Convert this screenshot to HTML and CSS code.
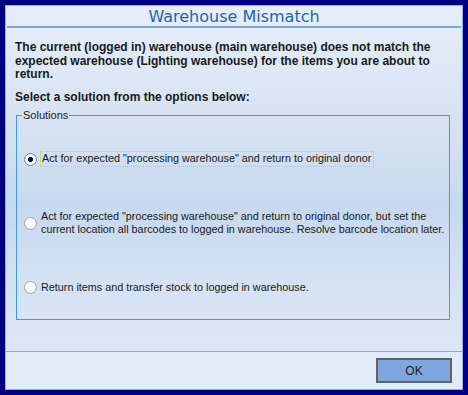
FILE: index.html
```html
<!DOCTYPE html>
<html lang="en">
<head>
  <meta charset="UTF-8" />
  <title>Warehouse Mismatch</title>
  <link rel="stylesheet" href="styles.css">
</head>
<body>
  <div class="dialog">
    <h1 class="title">Warehouse Mismatch</h1>
    <div class="content">
      <p class="message">The current (logged in) warehouse (main warehouse) does not match the expected warehouse (Lighting warehouse) for the items you are about to return.</p>
      <p class="message prompt">Select a solution from the options below:</p>
      <fieldset class="solutions">
        <legend>Solutions</legend>
        <label class="option first">
          <input type="radio" name="solution" checked>
          <span class="focused">Act for expected "processing warehouse" and return to original donor</span>
        </label>
        <label class="option second">
          <input type="radio" name="solution">
          <span>Act for expected "processing warehouse" and return to original donor, but set the current location all barcodes to logged in warehouse. Resolve barcode location later.</span>
        </label>
        <label class="option third">
          <input type="radio" name="solution">
          <span>Return items and transfer stock to logged in warehouse.</span>
        </label>
      </fieldset>
    </div>
    <div class="footer">
      <button class="ok-button">OK</button>
    </div>
  </div>
</body>
</html>
```

FILE: styles.css
```css
html, body {
  margin: 0;
  height: 100%;
}
body {
  background-color: #000080;
  font-family: "Liberation Sans", Arial, sans-serif;
  color: #1a1a1a;
  overflow: hidden;
}
.dialog {
  margin: 5px;
  width: 456px;
  height: 383px;
  border: 1px solid #8fb0e6;
  display: flex;
  flex-direction: column;
  background: linear-gradient(#e6eef9 0%, #d4e1f2 35%, #c7d9ef 52%, #d6e3f4 75%, #dfe9f7 100%);
}
.title {
  margin: 0 1px;
  height: 19px;
  padding-top: 1px;
  font-family: "DejaVu Sans", Verdana, sans-serif;
  font-weight: normal;
  font-size: 16px;
  line-height: 19px;
  text-align: center;
  color: #1f66a6;
  border-bottom: 2px solid #7ea9d3;
}
.content {
  flex: 1;
  padding: 13px 11px 0 9px;
}
.message {
  margin: 0;
  font-size: 12px;
  font-weight: bold;
  line-height: 13.5px;
}
.prompt {
  margin-top: 9px;
}
.solutions {
  margin: 5px 0 0 1px;
  padding: 0 0 25px;
  width: 434px;
  border: 1px solid #3d97f5;
  box-sizing: border-box;
  display: flex;
  flex-direction: column;
}
.solutions legend {
  margin-left: 5px;
  padding: 0 1px;
  font-size: 11px;
  line-height: 12px;
  color: #1a1a1a;
}
.option {
  display: flex;
  align-items: center;
  gap: 4px;
  padding-left: 7px;
  font-size: 10.8px;
  line-height: 13px;
}
.option.first {
  margin-top: 31px;
}
.option.second {
  margin-top: 44px;
}
.option.third {
  margin-top: 45px;
}
.option input {
  appearance: none;
  margin: 0;
  flex: none;
  width: 13px;
  height: 13px;
  border-radius: 50%;
  border: 1px solid #9aa6b4;
  background: radial-gradient(circle at 40% 40%, #ffffff 40%, #e6eaef 100%);
  box-sizing: border-box;
}
.option input:checked {
  border-color: #3a8be0;
  background: radial-gradient(circle, #111 0 2.2px, #ffffff 2.7px);
}
.focused {
  outline: 1px dotted #c8c870;
  padding: 0 2px 1px 1px;
}
.footer {
  height: 37px;
  border-top: 1px solid #a2a2a2;
  background: #e2ecf9;
  display: flex;
  justify-content: flex-end;
  align-items: flex-start;
}
.ok-button {
  margin: 6px 10px 0 0;
  width: 76px;
  height: 25px;
  border: 2px solid #626262;
  background: #7ea7e0;
  font-family: "Liberation Sans", Arial, sans-serif;
  font-size: 12px;
  color: #1a1a1a;
  padding: 0;
}
```
